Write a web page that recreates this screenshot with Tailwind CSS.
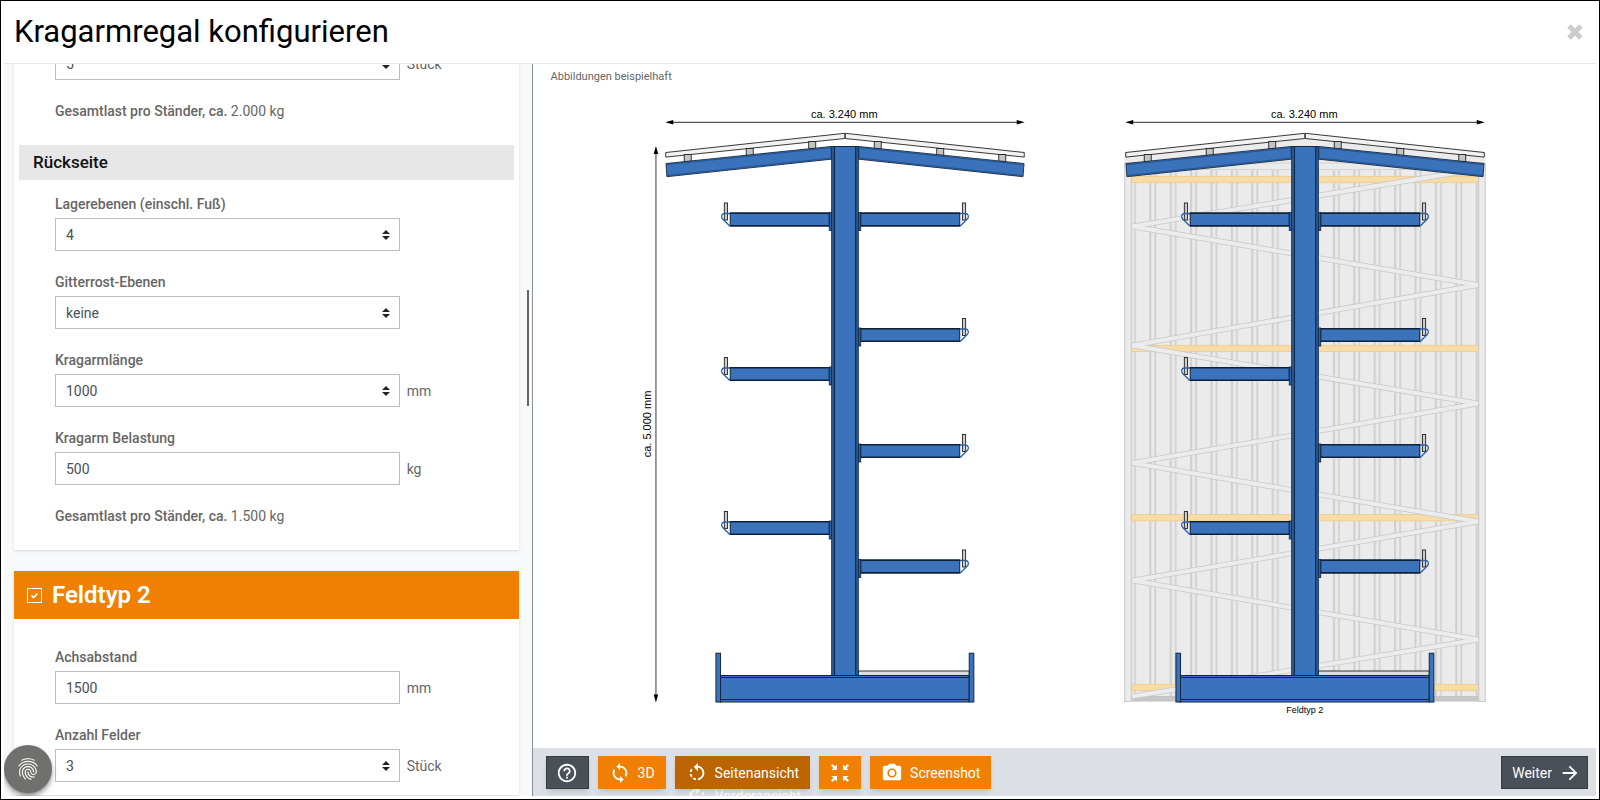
<!DOCTYPE html>
<html lang="de">
<head>
  <meta charset="UTF-8">
  <title>Kragarmregal konfigurieren</title>
  <meta name="viewport" content="width=device-width,initial-scale=1">
  <script src="https://cdn.jsdelivr.net/npm/@tailwindcss/browser@4"></script>
</head>
<body class="h-screen overflow-hidden bg-white font-[Roboto,sans-serif] text-sm text-[#666]">

<!-- Icons -->
<svg class="hidden">
  <symbol id="caret" viewBox="0 0 4 5"><path fill="#212529" d="M2 0L0 2h4zm0 5L0 3h4z"/></symbol>
  <symbol id="help" viewBox="0 0 24 24"><path d="M11 18h2v-2h-2v2zm1-16C6.48 2 2 6.48 2 12s4.480 10 10 10 10-4.480 10-10S17.520 2 12 2zm0 18c-4.410 0-8-3.590-8-8s3.590-8 8-8 8 3.590 8 8-3.590 8-8 8zm0-14c-2.210 0-4 1.790-4 4h2c0-1.100.900-2 2-2s2 .900 2 2c0 2-3 1.750-3 5h2c0-2.250 3-2.500 3-5 0-2.210-1.790-4-4-4z"/></symbol>
  <symbol id="loop" viewBox="0 0 24 24"><path d="M12 4V1L8 5l4 4V6c3.31 0 6 2.69 6 6 0 1.01-.25 1.97-.7 2.8l1.46 1.46C19.54 15.03 20 13.57 20 12c0-4.42-3.58-8-8-8zm0 14c-3.31 0-6-2.69-6-6 0-1.01.25-1.97.7-2.8L5.24 7.74C4.46 8.97 4 10.43 4 12c0 4.42 3.58 8 8 8v3l4-4-4-4v3z"/></symbol>
  <symbol id="rotate-left" viewBox="0 0 24 24"><path d="M7.11 8.53L5.7 7.11C4.8 8.27 4.24 9.61 4.07 11h2.02c.14-.87.49-1.72 1.02-2.47zM6.09 13H4.07c.17 1.39.72 2.73 1.62 3.89l1.41-1.42c-.52-.75-.87-1.59-1.01-2.47zm1.01 5.32c1.16.9 2.51 1.44 3.9 1.61V17.9c-.87-.15-1.71-.49-2.46-1.03L7.1 18.32zM13 4.07V1L8.45 5.55 13 10V6.09c2.84.48 5 2.94 5 5.91s-2.16 5.43-5 5.91v2.02c3.95-.49 7-3.85 7-7.93s-3.05-7.44-7-7.93z"/></symbol>
  <symbol id="rotate-right" viewBox="0 0 24 24"><path d="M15.55 5.55L11 1v3.07C7.06 4.56 4 7.92 4 12s3.05 7.44 7 7.93v-2.02c-2.84-.48-5-2.94-5-5.91s2.16-5.43 5-5.91V10l4.55-4.45zM19.93 11c-.17-1.39-.72-2.73-1.62-3.89l-1.42 1.42c.54.75.88 1.6 1.02 2.47h2.02zM13 17.9v2.02c1.39-.17 2.74-.71 3.9-1.61l-1.44-1.44c-.75.54-1.59.89-2.46 1.03zm3.89-2.42l1.42 1.41c.9-1.16 1.45-2.5 1.62-3.89h-2.02c-.14.87-.48 1.72-1.02 2.48z"/></symbol>
  <symbol id="shrink" viewBox="0 0 18 18">
    <path d="M6 .5V6H.5l2-2L0 1.500 1.500 0 4 2.500zM12 .5V6h5.500l-2-2L18 1.500 16.500 0 14 2.500zM6 17.500V12H.5l2 2L0 16.500 1.500 18 4 15.500zM12 17.500V12h5.500l-2 2 2.500 2.500-1.500 1.500-2.500-2.500z"/>
  </symbol>
  <symbol id="camera" viewBox="0 0 24 24"><circle cx="12" cy="12" r="3.200"/><path d="M9 2L7.170 4H4c-1.100 0-2 .9-2 2v12c0 1.100.9 2 2 2h16c1.100 0 2-.9 2-2V6c0-1.100-.9-2-2-2h-3.170L15 2H9zm3 15c-2.760 0-5-2.240-5-5s2.240-5 5-5 5 2.240 5 5-2.240 5-5 5z"/></symbol>
  <symbol id="arrow" viewBox="0 0 24 24"><path d="M12 4l-1.410 1.410L16.170 11H4v2h12.170l-5.580 5.590L12 20l8-8z"/></symbol>
  <symbol id="finger" viewBox="0 0 24 24"><path d="M17.81 4.47c-.08 0-.16-.02-.23-.06C15.66 3.42 14 3 12.01 3c-1.98 0-3.86.47-5.57 1.41-.24.13-.54.04-.68-.2-.13-.24-.04-.55.2-.68C7.82 2.52 9.86 2 12.01 2c2.13 0 3.99.47 6.03 1.52.25.13.34.43.21.67-.09.18-.26.28-.44.28zM3.5 9.72c-.1 0-.2-.03-.29-.09-.23-.16-.28-.47-.12-.7.99-1.4 2.25-2.5 3.75-3.27C9.98 4.04 14 4.03 17.15 5.65c1.5.77 2.76 1.86 3.75 3.25.16.22.11.54-.12.7-.23.16-.54.11-.7-.12-.9-1.26-2.04-2.25-3.39-2.94-2.87-1.47-6.54-1.47-9.4.01-1.36.7-2.5 1.7-3.4 2.96-.08.14-.23.21-.39.21zm6.25 12.07c-.13 0-.26-.05-.35-.15-.87-.87-1.34-1.43-2.01-2.64-.69-1.23-1.05-2.73-1.05-4.34 0-2.97 2.54-5.39 5.66-5.39s5.66 2.42 5.66 5.39c0 .28-.22.5-.5.5s-.5-.22-.5-.5c0-2.42-2.09-4.39-4.66-4.39-2.57 0-4.66 1.97-4.66 4.39 0 1.44.32 2.77.93 3.85.64 1.15 1.08 1.64 1.85 2.42.19.2.19.51 0 .71-.11.1-.24.15-.37.15zm7.17-1.85c-1.19 0-2.24-.3-3.1-.89-1.49-1.01-2.38-2.65-2.38-4.39 0-.28.22-.5.5-.5s.5.22.5.5c0 1.41.72 2.74 1.94 3.56.71.48 1.54.71 2.54.71.24 0 .64-.03 1.04-.1.27-.05.53.13.58.41.05.27-.13.53-.41.58-.57.11-1.07.12-1.21.12zM14.91 22c-.04 0-.09-.01-.13-.02-1.59-.44-2.63-1.03-3.72-2.1-1.4-1.39-2.17-3.24-2.17-5.22 0-1.62 1.38-2.94 3.08-2.94 1.7 0 3.08 1.32 3.08 2.94 0 1.07.93 1.94 2.08 1.94s2.08-.87 2.08-1.94c0-3.77-3.25-6.83-7.25-6.83-2.84 0-5.44 1.58-6.61 4.03-.39.81-.59 1.76-.59 2.8 0 .78.07 2.01.67 3.61.1.26-.03.55-.29.64-.26.1-.55-.04-.64-.29-.49-1.31-.73-2.61-.73-3.96 0-1.2.23-2.29.68-3.24 1.33-2.79 4.28-4.6 7.51-4.6 4.55 0 8.25 3.51 8.25 7.83 0 1.62-1.38 2.94-3.08 2.94s-3.08-1.32-3.08-2.94c0-1.07-.93-1.94-2.08-1.94s-2.08.87-2.08 1.94c0 1.71.66 3.31 1.87 4.51.95.94 1.86 1.46 3.27 1.85.27.07.42.35.35.61-.05.23-.26.38-.47.38z"/></symbol>
</svg>

<div class="h-full flex flex-col border border-black p-[3px]">

  <!-- Header -->
  <header class="h-[60px] shrink-0 flex items-center justify-between border-b border-[#e4e6e9] pl-[10px] pr-3 pb-1">
    <h1 class="text-[31px] leading-10 text-black">Kragarmregal konfigurieren</h1>
    <button type="button" aria-label="Schließen">
      <svg class="w-[18px] h-[18px]" viewBox="0 0 18 18"><path d="M3 3l12 12M15 3L3 15" stroke="#ccc" stroke-width="5"/></svg>
    </button>
  </header>

  <main class="flex-1 min-h-0 flex">

    <!-- Formular -->
    <form class="relative w-[33.2%] shrink-0 overflow-hidden bg-[#f8f9fa] border-r border-[#868e96] pl-[10px] pr-[13px]">

      <section class="-mt-[17px] bg-white shadow-sm pb-6">
        <div class="pl-[41px] pr-1">
          <div class="flex items-center gap-[7px]">
            <div class="relative w-3/4">
              <select id="ebenenVorn" aria-label="Anzahl" class="block w-full h-[33px] appearance-none border border-[#b9bec6] bg-white px-[10px] text-[#495057]"><option>5</option></select>
              <svg class="absolute right-[10px] top-3 w-2 h-[10px] pointer-events-none"><use href="#caret"/></svg>
            </div>
            <span>Stück</span>
          </div>
          <p class="mt-[21px] leading-5"><b class="font-medium">Gesamtlast pro Ständer, ca.</b> 2.000 kg</p>
        </div>

        <h3 class="mx-[5px] mt-6 mb-[14px] h-[35px] bg-[#e7e7e7] px-[14px] text-[17px] leading-[35px] font-medium text-[#111]">Rückseite</h3>

        <div class="pl-[41px] pr-1 flex flex-col gap-[21px]">
          <div>
            <label for="ebenen" class="block mb-1 leading-5 font-medium">Lagerebenen (einschl. Fuß)</label>
            <div class="relative w-3/4">
              <select id="ebenen" class="block w-full h-[33px] appearance-none border border-[#b9bec6] bg-white px-[10px] text-[#495057]"><option>4</option></select>
              <svg class="absolute right-[10px] top-3 w-2 h-[10px] pointer-events-none"><use href="#caret"/></svg>
            </div>
          </div>
          <div>
            <label for="gitter" class="block mb-1 leading-5 font-medium">Gitterrost-Ebenen</label>
            <div class="relative w-3/4">
              <select id="gitter" class="block w-full h-[33px] appearance-none border border-[#b9bec6] bg-white px-[10px] text-[#495057]"><option>keine</option></select>
              <svg class="absolute right-[10px] top-3 w-2 h-[10px] pointer-events-none"><use href="#caret"/></svg>
            </div>
          </div>
          <div>
            <label for="laenge" class="block mb-1 leading-5 font-medium">Kragarmlänge</label>
            <div class="flex items-center gap-[7px]">
              <div class="relative w-3/4">
                <select id="laenge" class="block w-full h-[33px] appearance-none border border-[#b9bec6] bg-white px-[10px] text-[#495057]"><option>1000</option></select>
                <svg class="absolute right-[10px] top-3 w-2 h-[10px] pointer-events-none"><use href="#caret"/></svg>
              </div>
              <span>mm</span>
            </div>
          </div>
          <div>
            <label for="last" class="block mb-1 leading-5 font-medium">Kragarm Belastung</label>
            <div class="flex items-center gap-[7px]">
              <input id="last" type="text" value="500" class="w-3/4 h-[33px] border border-[#b9bec6] bg-white px-[10px] text-[#495057]">
              <span>kg</span>
            </div>
          </div>
          <p class="leading-5"><b class="font-medium">Gesamtlast pro Ständer, ca.</b> 1.500 kg</p>
        </div>
      </section>

      <section class="mt-[21px] bg-white shadow-sm pb-[13px]">
        <div class="h-12 bg-[#ef8003] px-[13px] flex items-center gap-[10px] text-white">
          <div class="relative w-[15px] h-[15px]">
            <input id="feldtyp2" type="checkbox" checked class="block w-full h-full appearance-none border border-white">
            <svg class="absolute inset-0 w-full h-full pointer-events-none" viewBox="0 0 15 15"><path d="M4.500 7.500l2 2 4-4" fill="none" stroke="#fff" stroke-width="1.700"/></svg>
          </div>
          <label for="feldtyp2" class="text-2xl font-semibold">Feldtyp 2</label>
        </div>
        <div class="pl-[41px] pr-1 pt-7 flex flex-col gap-[21px]">
          <div>
            <label for="achse" class="block mb-1 leading-5 font-medium">Achsabstand</label>
            <div class="flex items-center gap-[7px]">
              <input id="achse" type="text" value="1500" class="w-3/4 h-[33px] border border-[#b9bec6] bg-white px-[10px] text-[#495057]">
              <span>mm</span>
            </div>
          </div>
          <div>
            <label for="felder" class="block mb-1 leading-5 font-medium">Anzahl Felder</label>
            <div class="flex items-center gap-[7px]">
              <div class="relative w-3/4">
                <select id="felder" class="block w-full h-[33px] appearance-none border border-[#b9bec6] bg-white px-[10px] text-[#495057]"><option>3</option></select>
                <svg class="absolute right-[10px] top-3 w-2 h-[10px] pointer-events-none"><use href="#caret"/></svg>
              </div>
              <span>Stück</span>
            </div>
          </div>
        </div>
      </section>

      <!-- Scrollbalken -->
      <div class="absolute right-[3px] top-[226px] w-[2px] h-[116px] bg-[#666]"></div>
      <!-- Datenschutz -->
      <button type="button" aria-label="Datenschutz" class="absolute left-0 bottom-[3px] w-12 h-12 rounded-full bg-[#70706e] shadow-md shadow-black/40 flex items-center justify-center">
        <svg class="w-[26px] h-[26px] fill-white"><use href="#finger"/></svg>
      </button>
    </form>

    <!-- Zeichnung -->
    <div class="flex-1 min-w-0 flex flex-col">
      <p class="pl-[18px] pt-1 h-7 shrink-0 text-[11px] leading-[18px]">Abbildungen beispielhaft</p>
      <svg class="flex-1 min-h-0 w-full" viewBox="533 92 1063 656" font-family="Liberation Sans, Arial, sans-serif" fill="#000">
        <defs>
          <pattern id="blech" x="1149" y="0" width="20.400" height="20" patternUnits="userSpaceOnUse">
            <rect width="2.200" height="20" fill="#d0d0d0"/>
            <rect x="5.200" width="1.800" height="20" fill="#d0d0d0"/>
          </pattern>
          <!-- Arm nach rechts, Ursprung = Ständerkante oben -->
          <g id="arm">
            <rect x="103.700" y="-9.500" width="3.200" height="17" fill="#ccc" stroke="#222" stroke-width=".9"/>
            <path d="M101 1h6c2.800.3 3.500 3.500 1.500 5.500L101.500 13.500" fill="none" stroke="#2a62ad" stroke-width="1.300"/>
            <rect x="2" y=".5" width="99" height="13" fill="#3a72bc" stroke="#0d2238"/>
            <path d="M2 .8h99M2 13.300h99" stroke="#0d2238" stroke-width="1.600"/>
            <rect x="-.5" y="0" width="2.500" height="18" fill="#2a62ad" stroke="#0d2238" stroke-width=".8"/>
          </g>
          <!-- halbes Dach, rechte Seite -->
          <g id="dach">
            <path d="M845 133.300l179 19.200v4.600l-179-18.600z" fill="#f2f2f2" stroke="#222" stroke-width=".9"/>
            <g fill="#c4c4c4" stroke="#222" stroke-width=".9">
              <rect x="874" y="141.500" width="7" height="7"/>
              <rect x="936.500" y="148.500" width="7" height="7"/>
              <rect x="998.500" y="154.500" width="7" height="7"/>
            </g>
            <path d="M858.500 146.500l165.300 17-1 13.200-164.300-17.500z" fill="#3a72bc" stroke="#1a2c40" stroke-width=".9"/>
            <path d="M858.500 147.700l165 17M858.500 158l164 17.500" stroke="#24548f"/>
          </g>
          <g id="regal">
            <use href="#dach"/>
            <use href="#dach" transform="matrix(-1 0 0 1 1689.500 0)"/>
            <rect x="858" y="671" width="111" height="4.500" fill="#ddd" stroke="#222" stroke-width=".9"/>
            <use href="#arm" x="858.500" y="212.500"/>
            <use href="#arm" x="858.500" y="328"/>
            <use href="#arm" x="858.500" y="444"/>
            <use href="#arm" x="858.500" y="559.500"/>
            <g transform="matrix(-1 0 0 1 1689.500 0)">
              <use href="#arm" x="858.500" y="212.500"/>
              <use href="#arm" x="858.500" y="367"/>
              <use href="#arm" x="858.500" y="521"/>
            </g>
            <rect x="831.500" y="146.500" width="26.500" height="529" fill="#3a72bc" stroke="#12273f"/>
            <path d="M833 147v528M856.600 147v528" stroke="#24548f" stroke-width="1.600"/>
            <path d="M834.300 147v528M855.400 147v528" stroke="#12273f"/>
            <rect x="720" y="675.500" width="249" height="26.500" fill="#3a72bc" stroke="#12273f"/>
            <path d="M720 677.500h249M720 699.500h249" stroke="#12273f"/>
            <rect x="715.700" y="653.200" width="4.600" height="48.800" fill="#3a72bc" stroke="#12273f"/>
            <rect x="969" y="653.200" width="4.600" height="48.800" fill="#3a72bc" stroke="#12273f"/>
            <!-- Maß Breite -->
            <path d="M672 122.300h346" stroke="#555" stroke-width="1.200"/>
            <path d="M665 122.300l8-2.300v4.600zM1024.500 122.300l-8-2.300v4.600z"/>
            <text x="844" y="118" font-size="11" text-anchor="middle">ca. 3.240 mm</text>
          </g>
        </defs>

        <!-- Maß Höhe -->
        <path d="M655.700 152v545" stroke="#666" stroke-width="1.300"/>
        <path d="M655.700 146l-2.300 8h4.600zM655.700 702.500l-2.300-8h4.600z"/>
        <text transform="translate(651 424) rotate(-90)" font-size="11" text-anchor="middle">ca. 5.000 mm</text>
        <use href="#regal"/>

        <!-- Rückwand -->
        <path d="M1124.500 152l180.500-18 180 18v549.500h-360.500z" fill="#ebebeb"/>
        <path d="M1131 169h347v532h-347z" fill="url(#blech)"/>
        <path d="M1131 169.500h347M1160 163h290" stroke="#d4d4d4"/>
        <path d="M1131 696h347v5.500h-347z" fill="#c6c6c6"/>
        <g fill="#f8dca8" stroke="#eccb8c" stroke-width=".8">
          <rect x="1131.500" y="176.300" width="347" height="6.400"/>
          <rect x="1131.500" y="345.300" width="347" height="6.400"/>
          <rect x="1131.500" y="514.500" width="347" height="6.400"/>
          <rect x="1131.500" y="684.300" width="347" height="6.400"/>
        </g>
        <g fill="none" stroke-linejoin="bevel">
          <path d="M1478 169L1132 226.500l346 58.500-346 60.500 346 58-346 59.500 346 58.500-346 59 346 59-346 57" stroke="#c8c8c8" stroke-width="5.500"/>
          <path d="M1478 169L1132 226.500l346 58.500-346 60.500 346 58-346 59.500 346 58.500-346 59 346 59-346 57" stroke="#ececec" stroke-width="4"/>
        </g>
        <g fill="#ebebeb" stroke="#c8c8c8">
          <rect x="1124.500" y="163" width="6.500" height="538.500"/>
          <rect x="1478.500" y="163" width="6.500" height="538.500"/>
        </g>
        <use href="#regal" x="460"/>
        <text x="1304.500" y="713" font-size="9" text-anchor="middle">Feldtyp 2</text>
      </svg>

      <!-- Werkzeugleiste -->
      <footer class="h-12 shrink-0 overflow-hidden bg-[#dce0e4] pl-[13px] pr-2 pt-2 flex items-start gap-[9px] text-white">
        <button type="button" aria-label="Hilfe" class="w-[43px] h-[33px] bg-[#495057] border border-[#343a40] shadow-md flex items-center justify-center"><svg class="w-[22px] h-[22px] fill-white"><use href="#help"/></svg></button>
        <button type="button" class="h-[33px] bg-[#ef8003] px-[11px] shadow-md flex items-center gap-[7px]"><svg class="w-[22px] h-[22px] fill-white"><use href="#loop"/></svg>3D</button>
        <div class="relative">
          <button type="button" class="relative z-10 h-[33px] bg-[#bd6402] px-[11px] shadow-md flex items-center gap-[7px]"><svg class="w-[22px] h-[22px] fill-white"><use href="#rotate-left"/></svg>Seitenansicht</button>
          <button type="button" class="absolute left-0 top-[29px] px-[11px] flex items-center gap-[7px]"><svg class="w-[22px] h-[22px] fill-white"><use href="#rotate-right"/></svg>Vorderansicht</button>
        </div>
        <button type="button" aria-label="Einpassen" class="w-[42px] h-[33px] bg-[#ef8003] shadow-md flex items-center justify-center"><svg class="w-[18px] h-[18px] fill-white"><use href="#shrink"/></svg></button>
        <button type="button" class="h-[33px] bg-[#ef8003] px-[11px] shadow-md flex items-center gap-[7px]"><svg class="w-[22px] h-[22px] fill-white"><use href="#camera"/></svg>Screenshot</button>
        <button type="button" class="ml-auto h-[33px] bg-[#495057] border border-[#343a40] pl-[10px] pr-[6px] flex items-center gap-[7px]">Weiter<svg class="w-[22px] h-[22px] fill-white"><use href="#arrow"/></svg></button>
      </footer>
    </div>
  </main>
</div>
</body>
</html>
